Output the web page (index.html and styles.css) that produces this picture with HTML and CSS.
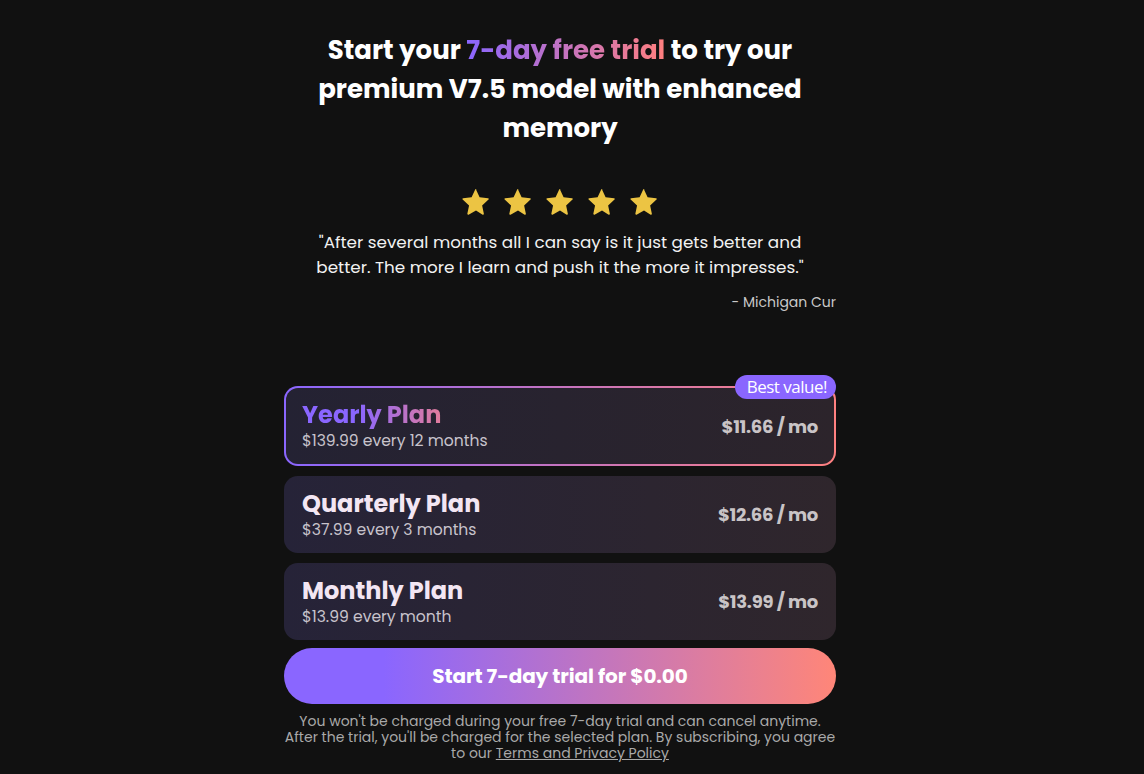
FILE: index.html
```html
<!DOCTYPE html>
<html>
<head>
<meta charset="utf-8">
<link rel="stylesheet" href="styles.css">
</head>
<body>
<main class="page">
  <h1 class="headline">Start your <span class="grad-text">7-day free trial</span> to try our premium V7.5 model with enhanced memory</h1>

  <div class="stars">
    <svg class="star" viewBox="0 0 24 24"><path d="M12 2.6l2.7 5.9 6.4.7c.5.1.7.7.3 1l-4.8 4.4 1.3 6.3c.1.5-.4.9-.9.6L12 18.3l-5.6 3.2c-.5.3-1-.1-.9-.6l1.3-6.3L2 10.2c-.4-.3-.2-.9.3-1l6.4-.7L11.4 2.6c.2-.5.9-.5 1.1 0z"/></svg>
    <svg class="star" viewBox="0 0 24 24"><path d="M12 2.6l2.7 5.9 6.4.7c.5.1.7.7.3 1l-4.8 4.4 1.3 6.3c.1.5-.4.9-.9.6L12 18.3l-5.6 3.2c-.5.3-1-.1-.9-.6l1.3-6.3L2 10.2c-.4-.3-.2-.9.3-1l6.4-.7L11.4 2.6c.2-.5.9-.5 1.1 0z"/></svg>
    <svg class="star" viewBox="0 0 24 24"><path d="M12 2.6l2.7 5.9 6.4.7c.5.1.7.7.3 1l-4.8 4.4 1.3 6.3c.1.5-.4.9-.9.6L12 18.3l-5.6 3.2c-.5.3-1-.1-.9-.6l1.3-6.3L2 10.2c-.4-.3-.2-.9.3-1l6.4-.7L11.4 2.6c.2-.5.9-.5 1.1 0z"/></svg>
    <svg class="star" viewBox="0 0 24 24"><path d="M12 2.6l2.7 5.9 6.4.7c.5.1.7.7.3 1l-4.8 4.4 1.3 6.3c.1.5-.4.9-.9.6L12 18.3l-5.6 3.2c-.5.3-1-.1-.9-.6l1.3-6.3L2 10.2c-.4-.3-.2-.9.3-1l6.4-.7L11.4 2.6c.2-.5.9-.5 1.1 0z"/></svg>
    <svg class="star" viewBox="0 0 24 24"><path d="M12 2.6l2.7 5.9 6.4.7c.5.1.7.7.3 1l-4.8 4.4 1.3 6.3c.1.5-.4.9-.9.6L12 18.3l-5.6 3.2c-.5.3-1-.1-.9-.6l1.3-6.3L2 10.2c-.4-.3-.2-.9.3-1l6.4-.7L11.4 2.6c.2-.5.9-.5 1.1 0z"/></svg>
  </div>

  <blockquote class="quote">"After several months all I can say is it just gets better and better. The more I learn and push it the more it impresses."</blockquote>
  <div class="author">- Michigan Cur</div>

  <section class="plans">
    <div class="plan plan-selected">
      <span class="badge">Best value!</span>
      <div class="plan-inner">
        <div class="plan-info">
          <div class="plan-name plan-name-grad">Yearly Plan</div>
          <div class="plan-sub">$139.99 every 12 months</div>
        </div>
        <div class="plan-price">$11.66 / mo</div>
      </div>
    </div>
    <div class="plan">
      <div class="plan-inner">
        <div class="plan-info">
          <div class="plan-name">Quarterly Plan</div>
          <div class="plan-sub">$37.99 every 3 months</div>
        </div>
        <div class="plan-price">$12.66 / mo</div>
      </div>
    </div>
    <div class="plan">
      <div class="plan-inner">
        <div class="plan-info">
          <div class="plan-name">Monthly Plan</div>
          <div class="plan-sub">$13.99 every month</div>
        </div>
        <div class="plan-price">$13.99 / mo</div>
      </div>
    </div>
    <button class="cta">Start 7-day trial for $0.00</button>
    <p class="disclaimer">You won't be charged during your free 7-day trial and can cancel anytime. After the trial, you'll be charged for the selected plan. By subscribing, you agree to our <a href="#">Terms and Privacy Policy</a></p>
  </section>
</main>
</body>
</html>
```

FILE: styles.css
```css
* { box-sizing: border-box; }
html, body { margin: 0; padding: 0; background: #111111; }
body {
  font-family: "Poppins", "Noto Sans", "DejaVu Sans", sans-serif;
  color: #fff;
  height: 774px;
  overflow: hidden;
}
.page {
  width: 1120px;
  display: flex;
  flex-direction: column;
  align-items: center;
  padding-top: 31px;
}
.headline {
  margin: 0;
  width: 500px;
  text-align: center;
  font-size: 26px;
  line-height: 39px;
  font-weight: 700;
}
.grad-text {
  background: linear-gradient(90deg, #8a66ff 0%, #ff7f7f 100%);
  -webkit-background-clip: text;
  background-clip: text;
  color: transparent;
}
.stars {
  display: flex;
  gap: 10px;
  margin-top: 38px;
}
.star { width: 32px; height: 32px; fill: #ecc443; }
.quote {
  margin: 12px 0 0;
  width: 530px;
  text-align: center;
  font-size: 16.8px;
  line-height: 25px;
  color: #f2f2f2;
}
.author {
  width: 552px;
  text-align: right;
  font-size: 14px;
  color: #c9c9c9;
  margin-top: 12px;
}
.plans {
  width: 552px;
  margin-top: 73px;
  display: flex;
  flex-direction: column;
  gap: 10px;
}
.plan {
  position: relative;
  border-radius: 14px;
  background: linear-gradient(90deg, #262338 0%, #2f262c 100%);
}
.plan-selected {
  padding: 2px;
  background: linear-gradient(90deg, #8a66ff 0%, #ff8080 100%);
}
.plan-inner {
  height: 77px;
  border-radius: 12px;
  display: flex;
  align-items: center;
  justify-content: space-between;
  padding: 0 18px;
}
.plan-selected .plan-inner {
  height: 76px;
  padding: 0 16px;
  background: linear-gradient(90deg, #242233 0%, #2c242b 100%);
}
.plan-name {
  font-size: 24px;
  font-weight: 700;
  line-height: 28px;
  color: #f3e6f3;
  display: inline-block;
}
.plan-name-grad {
  background: linear-gradient(90deg, #8a66ff 40%, #e27c9c 100%);
  -webkit-background-clip: text;
  background-clip: text;
  color: transparent;
}
.plan-sub {
  font-size: 15.6px;
  line-height: 21px;
  color: #c8c3cc;
}
.plan-price {
  font-size: 18px;
  font-weight: 700;
  color: #c9c4c6;
  letter-spacing: -0.3px;
}
.badge {
  position: absolute;
  right: 0;
  top: -11px;
  background: #8a66ff;
  color: #fff;
  font-family: "Open Sans", sans-serif;
  font-size: 17px;
  line-height: 24px;
  padding: 0 9px 0 12px;
  border-radius: 12px;
  letter-spacing: -0.5px;
}
.cta {
  margin-top: -2px;
  height: 56px;
  border: 0;
  border-radius: 28px;
  background: linear-gradient(90deg, #8a66ff 0%, #8a66ff 18%, #ff8678 100%);
  color: #fff;
  font-family: inherit;
  font-size: 20px;
  font-weight: 700;
  letter-spacing: -0.1px;
}
.disclaimer {
  margin: -1px 0 0;
  text-align: center;
  font-size: 14px;
  line-height: 16px;
  color: #a9a9a9;
}
.disclaimer a { color: #a9a9a9; }
```
